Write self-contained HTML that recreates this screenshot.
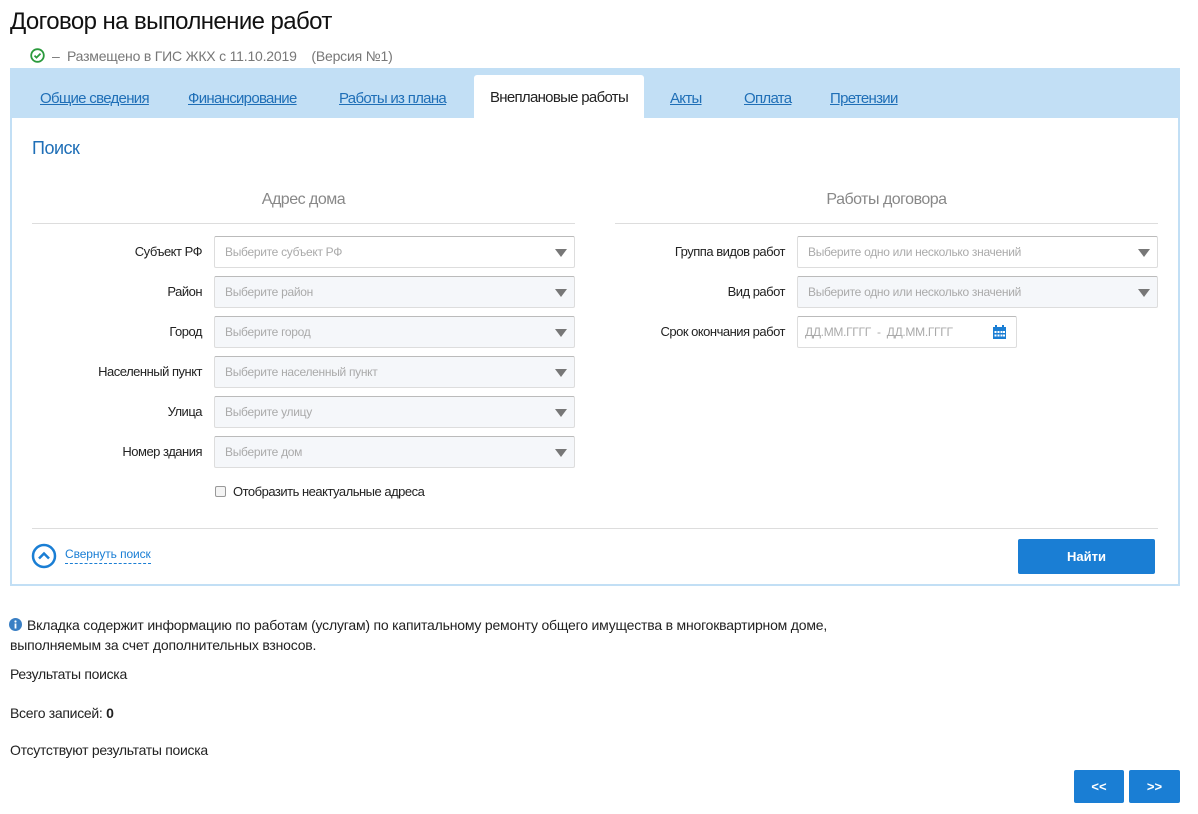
<!DOCTYPE html>
<html><head><meta charset="utf-8"><style>
*{box-sizing:border-box;margin:0;padding:0}
body{width:1198px;height:814px;background:#fff;font-family:"Liberation Sans",sans-serif;color:#222;position:relative;overflow:hidden;letter-spacing:-0.5px}
.a{position:absolute;white-space:nowrap}
.tabs{position:absolute;left:10px;top:68px;width:1170px;height:50px;background:#c2dff5}
.tab{position:absolute;top:22px;font-size:15px;color:#1f6fb7;text-decoration:underline;letter-spacing:-0.7px}
.act{position:absolute;left:464px;top:7px;width:170px;height:43px;background:#fff;border-radius:3px 3px 0 0;font-size:15px;color:#222;text-align:center;line-height:46px;letter-spacing:-0.7px}
.panel{position:absolute;left:10px;top:118px;width:1170px;height:468px;border:2px solid #c2dff5;border-top:none}
.lbl{position:absolute;font-size:13px;text-align:right;width:200px}
.inp{position:absolute;height:32px;border:1px solid #ddd;border-top-color:#bbb;border-radius:2px;background:#f5f7fa;font-size:12px;color:#aaa;padding:0 10px;line-height:30px;letter-spacing:-0.3px}
.inp.w{background:#fff}
.inp .tri{position:absolute;right:7px;top:12px;width:0;height:0;border-left:6px solid transparent;border-right:6px solid transparent;border-top:8px solid #777}
.hd{position:absolute;font-size:16px;color:#888;text-align:center}
.line{position:absolute;height:1px;background:#ddd}
.btn{position:absolute;background:#1a7ed4;color:#fff;font-weight:bold;font-size:13px;text-align:center;border-radius:2px;letter-spacing:0}
</style></head><body>
<div class="a" style="left:10px;top:8px;font-size:24px;color:#111;letter-spacing:-0.6px">Договор на выполнение работ</div>
<svg class="a" style="left:30px;top:48px" width="15" height="15" viewBox="0 0 15 15"><circle cx="7.5" cy="7.5" r="6.3" fill="none" stroke="#2a9a3c" stroke-width="1.8"/><path d="M4.5 7.6l2 2 4-4" fill="none" stroke="#2a9a3c" stroke-width="1.8"/></svg>
<div class="a" style="left:52px;top:48px;font-size:14px;color:#777;letter-spacing:-0.2px">–&nbsp; Размещено в ГИС ЖКХ с 11.10.2019 &nbsp;&nbsp; (Версия №1)</div>
<div class="tabs">
<span class="tab" style="left:30px">Общие сведения</span>
<span class="tab" style="left:178px">Финансирование</span>
<span class="tab" style="left:329px">Работы из плана</span>
<div class="act">Внеплановые работы</div>
<span class="tab" style="left:660px">Акты</span>
<span class="tab" style="left:734px">Оплата</span>
<span class="tab" style="left:820px">Претензии</span>
</div>
<div class="panel"></div>
<div class="a" style="left:32px;top:138px;font-size:18px;color:#1f6fb7">Поиск</div>
<div class="hd" style="left:32px;top:191px;width:543px">Адрес дома</div>
<div class="hd" style="left:615px;top:191px;width:543px">Работы договора</div>
<div class="line" style="left:32px;top:223px;width:543px"></div>
<div class="line" style="left:615px;top:223px;width:543px"></div>

<div class="lbl" style="left:2px;top:244px">Субъект РФ</div><div class="inp w" style="left:214px;top:236px;width:361px">Выберите субъект РФ<i class="tri"></i></div>
<div class="lbl" style="left:2px;top:284px">Район</div><div class="inp" style="left:214px;top:276px;width:361px">Выберите район<i class="tri"></i></div>
<div class="lbl" style="left:2px;top:324px">Город</div><div class="inp" style="left:214px;top:316px;width:361px">Выберите город<i class="tri"></i></div>
<div class="lbl" style="left:2px;top:364px">Населенный пункт</div><div class="inp" style="left:214px;top:356px;width:361px">Выберите населенный пункт<i class="tri"></i></div>
<div class="lbl" style="left:2px;top:404px">Улица</div><div class="inp" style="left:214px;top:396px;width:361px">Выберите улицу<i class="tri"></i></div>
<div class="lbl" style="left:2px;top:444px">Номер здания</div><div class="inp" style="left:214px;top:436px;width:361px">Выберите дом<i class="tri"></i></div>
<div class="a" style="left:215px;top:486px;width:11px;height:11px;border:1px solid #999;border-radius:2px;background:#f4f4f4"></div>
<div class="a" style="left:233px;top:484px;font-size:13px">Отобразить неактуальные адреса</div>

<div class="lbl" style="left:585px;top:244px">Группа видов работ</div><div class="inp w" style="left:797px;top:236px;width:361px">Выберите одно или несколько значений<i class="tri"></i></div>
<div class="lbl" style="left:585px;top:284px">Вид работ</div><div class="inp" style="left:797px;top:276px;width:361px">Выберите одно или несколько значений<i class="tri"></i></div>
<div class="lbl" style="left:585px;top:324px">Срок окончания работ</div><div class="inp w" style="left:797px;top:316px;width:220px;padding-left:7px">ДД.ММ.ГГГГ &nbsp;-&nbsp; ДД.ММ.ГГГГ
<svg style="position:absolute;right:9px;top:8px" width="15" height="15" viewBox="0 0 15 15"><rect x="1" y="2" width="13" height="12" fill="#1a7ed4"/><rect x="3" y="0" width="2" height="3" fill="#1a7ed4"/><rect x="10" y="0" width="2" height="3" fill="#1a7ed4"/><g fill="#fff"><rect x="2.5" y="6" width="2" height="2"/><rect x="5.5" y="6" width="2" height="2"/><rect x="8.5" y="6" width="2" height="2"/><rect x="11" y="6" width="2" height="2"/><rect x="2.5" y="9.5" width="2" height="2"/><rect x="5.5" y="9.5" width="2" height="2"/><rect x="8.5" y="9.5" width="2" height="2"/><rect x="11" y="9.5" width="2" height="2"/></g></svg></div>

<div class="line" style="left:32px;top:528px;width:1126px"></div>
<svg class="a" style="left:31px;top:543px" width="26" height="26" viewBox="0 0 26 26"><circle cx="13" cy="13" r="11" fill="none" stroke="#1a7ed4" stroke-width="2.5"/><path d="M8 15.5l5-5 5 5" fill="none" stroke="#1a7ed4" stroke-width="2.5"/></svg>
<div class="a" style="left:65px;top:547px;font-size:12px;color:#1a7ed4;border-bottom:1px dashed #1a7ed4;padding-bottom:2px;letter-spacing:-0.1px">Свернуть поиск</div>
<div class="btn" style="left:1018px;top:539px;width:137px;height:35px;line-height:35px">Найти</div>

<svg class="a" style="left:9px;top:618px" width="13" height="13" viewBox="0 0 13 13"><circle cx="6.5" cy="6.5" r="6.5" fill="#3a7fc4"/><rect x="5.6" y="5.5" width="1.8" height="5" fill="#fff"/><circle cx="6.5" cy="3.5" r="1.1" fill="#fff"/></svg>
<div class="a" style="left:27px;top:617px;font-size:14px;letter-spacing:-0.2px">Вкладка содержит информацию по работам (услугам) по капитальному ремонту общего имущества в многоквартирном доме,</div>
<div class="a" style="left:10px;top:637px;font-size:14px;letter-spacing:-0.2px">выполняемым за счет дополнительных взносов.</div>
<div class="a" style="left:10px;top:666px;font-size:14px;letter-spacing:-0.3px">Результаты поиска</div>
<div class="a" style="left:10px;top:705px;font-size:14px;letter-spacing:-0.3px">Всего записей: <b>0</b></div>
<div class="a" style="left:10px;top:742px;font-size:14px;letter-spacing:-0.3px">Отсутствуют результаты поиска</div>
<div class="btn" style="left:1074px;top:770px;width:50px;height:33px;line-height:33px">&lt;&lt;</div>
<div class="btn" style="left:1129px;top:770px;width:51px;height:33px;line-height:33px">&gt;&gt;</div>
</body></html>
